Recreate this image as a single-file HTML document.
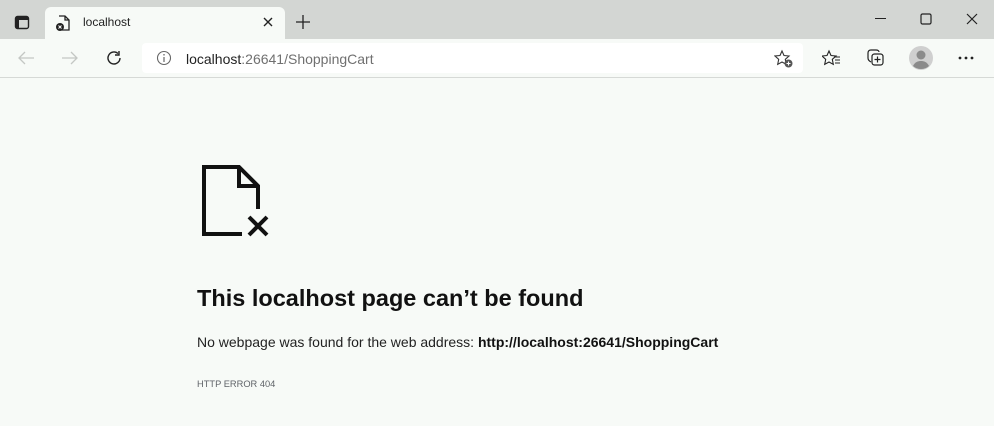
<!DOCTYPE html>
<html><head><meta charset="utf-8"><style>
*{margin:0;padding:0;box-sizing:border-box}
body{width:994px;height:426px;overflow:hidden;background:#f7faf7;font-family:"Liberation Sans",sans-serif;position:relative}
.strip{position:absolute;left:0;top:0;width:994px;height:39px;background:#d3d6d3}
.tab{position:absolute;left:45px;top:7px;width:240px;height:32px;background:#f7faf7;border-radius:6px 6px 0 0}
.toolbar{position:absolute;left:0;top:39px;width:994px;height:39px;background:#f7faf7;border-bottom:1px solid #d6d9d6}
.addr{position:absolute;left:142px;top:43px;width:661px;height:30px;background:#fff;border-radius:4px}
.t{position:absolute;white-space:nowrap}
svg{position:absolute}
</style></head><body>
<div class="strip"></div>
<div class="tab"></div>
<div class="toolbar"></div>
<div class="addr"></div>
<svg style="left:14px;top:15px" width="16" height="16" viewBox="0 0 16 16"><rect x="1.5" y="1.5" width="13" height="12" rx="2" fill="none" stroke="#222" stroke-width="1.4"/><rect x="2" y="2" width="12" height="3" fill="#222"/><rect x="2" y="2" width="3" height="11" fill="#222"/></svg>
<svg style="left:55px;top:14px" width="16" height="18" viewBox="0 0 16 18"><path d="M4 2h6l4 4v10H7" fill="none" stroke="#222" stroke-width="1.3"/><path d="M10 2v4h4" fill="none" stroke="#222" stroke-width="1.3"/><circle cx="5" cy="13" r="4" fill="#222"/><path d="M3.5 11.5l3 3M6.5 11.5l-3 3" stroke="#fff" stroke-width="1"/></svg>
<div class="t" style="left:83px;top:15px;font-size:12px;color:#222">localhost</div>
<svg style="left:263px;top:17px" width="10" height="10" viewBox="0 0 10 10"><path d="M1 1l8 8M9 1l-8 8" stroke="#222" stroke-width="1.4"/></svg>
<svg style="left:295px;top:14px" width="16" height="16" viewBox="0 0 16 16"><path d="M8 1v14M1 8h14" stroke="#222" stroke-width="1.3"/></svg>
<svg style="left:875px;top:18px" width="12" height="2"><rect width="11" height="1" fill="#222"/></svg>
<svg style="left:920px;top:13px" width="12" height="12"><rect x="1" y="1" width="10" height="10" rx="1.5" fill="none" stroke="#222" stroke-width="1.2"/></svg>
<svg style="left:966px;top:13px" width="12" height="12"><path d="M1 1l10 10M11 1l-10 10" stroke="#222" stroke-width="1.2"/></svg>
<svg style="left:17px;top:50px" width="18" height="16" viewBox="0 0 18 16"><path d="M17 8H2M8 2L2 8l6 6" fill="none" stroke="#c4c7c4" stroke-width="1.3"/></svg>
<svg style="left:61px;top:50px" width="18" height="16" viewBox="0 0 18 16"><path d="M1 8h15M10 2l6 6-6 6" fill="none" stroke="#c4c7c4" stroke-width="1.3"/></svg>
<svg style="left:105px;top:49px" width="18" height="18" viewBox="0 0 18 18"><path d="M15 9a6 6 0 1 1-2-4.5" fill="none" stroke="#222" stroke-width="1.4"/><path d="M14 2v4h-4" fill="none" stroke="#222" stroke-width="1.4"/></svg>
<svg style="left:156px;top:50px" width="16" height="16" viewBox="0 0 16 16"><circle cx="8" cy="8" r="6.5" fill="none" stroke="#666" stroke-width="1.1"/><path d="M8 7v5" stroke="#666" stroke-width="1.2"/><circle cx="8" cy="4.8" r=".8" fill="#666"/></svg>
<div class="t" style="left:186px;top:51px;font-size:14px;color:#222">localhost<span style="color:#707070">:26641/ShoppingCart</span></div>
<svg style="left:774px;top:49px" width="20" height="20" viewBox="0 0 20 20"><path d="M8 2l2 4.5 5 .5-3.7 3.3 1 5L8 13l-4.3 2.3 1-5L1 7l5-.5z" fill="none" stroke="#333" stroke-width="1.1"/><circle cx="14.5" cy="14.5" r="4" fill="#555"/><path d="M14.5 12.5v4M12.5 14.5h4" stroke="#fff" stroke-width="1.1"/></svg>
<svg style="left:822px;top:49px" width="20" height="20" viewBox="0 0 20 20"><path d="M7 2l2 4.5 5 .5-3.7 3.3 1 5L7 13l-4.3 2.3 1-5L0 7l5-.5z" fill="none" stroke="#222" stroke-width="1.1"/><path d="M12 8h6M13 11h5M13 14h5" stroke="#222" stroke-width="1.1"/></svg>
<svg style="left:866px;top:48px" width="20" height="20" viewBox="0 0 20 20"><path d="M5 14c-2-1-3-2-3-4V5c0-2 1-3 3-3h5c2 0 3 1 3 2" fill="none" stroke="#222" stroke-width="1.2"/><rect x="6" y="6" width="11" height="11" rx="2.5" fill="none" stroke="#222" stroke-width="1.2"/><path d="M11.5 8.5v6M8.5 11.5h6" stroke="#222" stroke-width="1.2"/></svg>
<svg style="left:909px;top:46px" width="24" height="24" viewBox="0 0 24 24"><circle cx="12" cy="12" r="12" fill="#cfcfcf"/><circle cx="12" cy="9" r="4.5" fill="#8a8a8a"/><path d="M4 20c2-4 5-5 8-5s6 1 8 5a12 12 0 0 1-16 0z" fill="#8a8a8a"/></svg>
<svg style="left:958px;top:56px" width="18" height="4"><circle cx="2" cy="2" r="1.4" fill="#222"/><circle cx="8" cy="2" r="1.4" fill="#222"/><circle cx="14" cy="2" r="1.4" fill="#222"/></svg>
<svg style="left:195px;top:160px" width="80" height="82" viewBox="195 160 80 82"><path d="M242 234H204V167H239l19 19v23" fill="none" stroke="#111" stroke-width="4"/><path d="M239 167v19h19" fill="none" stroke="#111" stroke-width="4"/><path d="M249 217l18 18M267 217l-18 18" stroke="#111" stroke-width="4"/></svg>
<div class="t" style="left:197px;top:285px;font-size:23.5px;font-weight:bold;color:#111">This localhost page can’t be found</div>
<div class="t" style="left:197px;top:334px;font-size:14px;color:#222">No webpage was found for the web address: <b style="color:#111">http://localhost:26641/ShoppingCart</b></div>
<div class="t" style="left:197px;top:379px;font-size:9.3px;color:#5f6368">HTTP ERROR 404</div>
</body></html>
